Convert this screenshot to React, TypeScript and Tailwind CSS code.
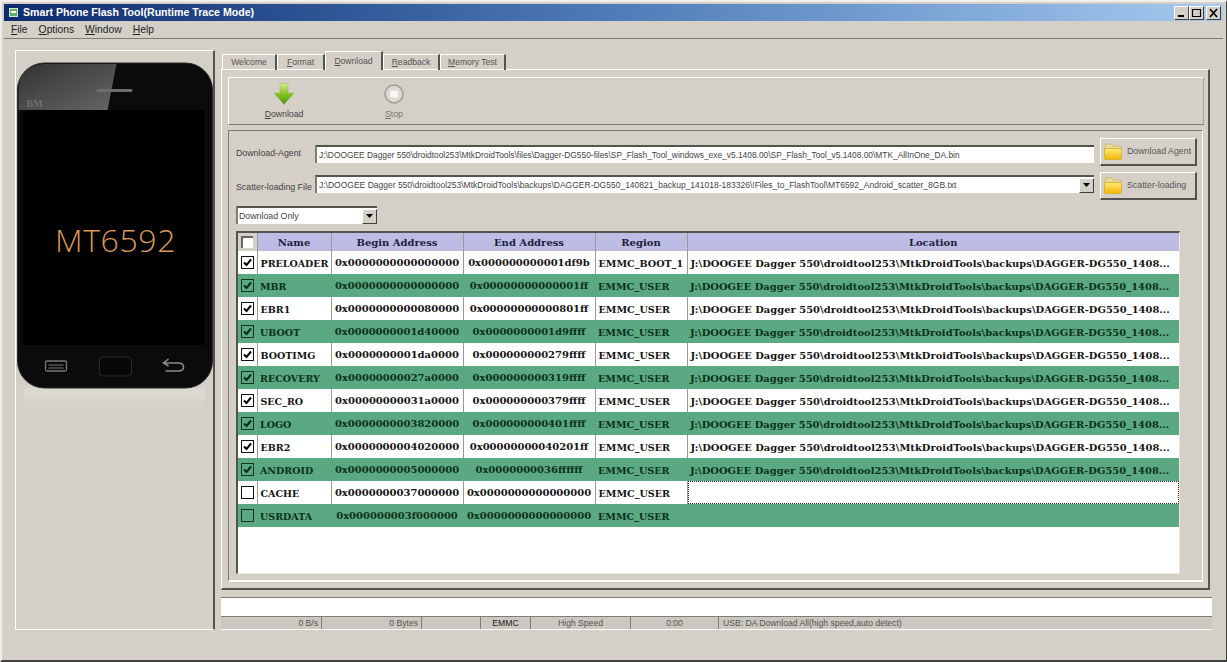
import React from "react";

const LOC = "J:\\DOOGEE Dagger 550\\droidtool253\\MtkDroidTools\\backups\\DAGGER-DG550_1408...";

const rows = [
  { name: "PRELOADER", begin: "0x0000000000000000", end: "0x000000000001df9b", region: "EMMC_BOOT_1", on: true, loc: LOC },
  { name: "MBR", begin: "0x0000000000000000", end: "0x00000000000001ff", region: "EMMC_USER", on: true, loc: LOC },
  { name: "EBR1", begin: "0x0000000000080000", end: "0x00000000000801ff", region: "EMMC_USER", on: true, loc: LOC },
  { name: "UBOOT", begin: "0x0000000001d40000", end: "0x0000000001d9ffff", region: "EMMC_USER", on: true, loc: LOC },
  { name: "BOOTIMG", begin: "0x0000000001da0000", end: "0x000000000279ffff", region: "EMMC_USER", on: true, loc: LOC },
  { name: "RECOVERY", begin: "0x00000000027a0000", end: "0x000000000319ffff", region: "EMMC_USER", on: true, loc: LOC },
  { name: "SEC_RO", begin: "0x00000000031a0000", end: "0x000000000379ffff", region: "EMMC_USER", on: true, loc: LOC },
  { name: "LOGO", begin: "0x0000000003820000", end: "0x000000000401ffff", region: "EMMC_USER", on: true, loc: LOC },
  { name: "EBR2", begin: "0x0000000004020000", end: "0x00000000040201ff", region: "EMMC_USER", on: true, loc: LOC },
  { name: "ANDROID", begin: "0x0000000005000000", end: "0x0000000036ffffff", region: "EMMC_USER", on: true, loc: LOC },
  { name: "CACHE", begin: "0x0000000037000000", end: "0x0000000000000000", region: "EMMC_USER", on: false, loc: "" },
  { name: "USRDATA", begin: "0x000000003f000000", end: "0x0000000000000000", region: "EMMC_USER", on: false, loc: "" },
];

function Folder() {
  return (
    <svg width="18" height="17" viewBox="0 0 18 17" className="shrink-0">
      <defs>
        <linearGradient id="fold" x1="0" y1="0" x2="0" y2="1">
          <stop offset="0" stopColor="#ffe97a" />
          <stop offset="1" stopColor="#f2b600" />
        </linearGradient>
      </defs>
      <path d="M1 3 Q1 1 3 1 H7 L9 3 H15 Q17 3 17 5 V6 H1 Z" fill="#e8d9a0" stroke="#c9a93c" strokeWidth="0.6" />
      <path d="M0.5 5.5 H17.5 V15 Q17.5 16.5 16 16.5 H2 Q0.5 16.5 0.5 15 Z" fill="url(#fold)" stroke="#cfa30e" strokeWidth="0.6" />
    </svg>
  );
}

function Caret() {
  return (
    <span className="flex h-[15px] w-[15px] shrink-0 items-center justify-center border border-t-white border-l-white border-r-[#404040] border-b-[#404040] bg-[#d4d0c8]">
      <svg width="7" height="4" viewBox="0 0 7 4">
        <path d="M0 0 H7 L3.5 4 Z" fill="#000" />
      </svg>
    </span>
  );
}

function Check({ on, green }: { on: boolean; green: boolean }) {
  return (
    <span
      className={
        green
          ? "flex h-[13px] w-[13px] items-center justify-center border border-[#12351f] bg-[#5aa982]"
          : "flex h-[13px] w-[13px] items-center justify-center border border-[#111] bg-white"
      }
    >
      {on && (
        <svg width="11" height="11" viewBox="0 0 11 11">
          <path d="M2 5.5 L4.5 8 L9 2.5" fill="none" stroke={green ? "#0c2a16" : "#000"} strokeWidth="2" />
        </svg>
      )}
    </span>
  );
}

function WinButton({ kind }: { kind: "min" | "max" | "close" }) {
  return (
    <span className="flex h-[14px] w-[15px] items-center justify-center border border-t-white border-l-white border-r-[#404040] border-b-[#404040] bg-[#d4d0c8]">
      <svg width="11" height="10" viewBox="0 0 11 10">
        {kind === "min" && <rect x="2" y="7" width="6" height="2" fill="#000" />}
        {kind === "max" && <path d="M1.5 1.5 H9.5 V8.5 H1.5 Z M1 1.5 H10" fill="none" stroke="#000" strokeWidth="1.2" />}
        {kind === "close" && <path d="M2 1 L9 9 M9 1 L2 9" stroke="#000" strokeWidth="1.7" />}
      </svg>
    </span>
  );
}

function Phone() {
  return (
    <svg width="198" height="362" viewBox="0.5 1 198 362" className="block">
      <defs>
        <linearGradient id="glare" x1="0" y1="0" x2="1" y2="1">
          <stop offset="0" stopColor="#333" />
          <stop offset="1" stopColor="#666" />
        </linearGradient>
        <linearGradient id="refl" x1="0" y1="0" x2="0" y2="1">
          <stop offset="0" stopColor="#c4c1ba" />
          <stop offset="0.3" stopColor="#dcd9d3" />
          <stop offset="1" stopColor="#d4d0c8" />
        </linearGradient>
      </defs>
      <rect x="8" y="330" width="182" height="32" rx="10" fill="url(#refl)" />
      <rect x="2" y="13" width="195" height="325" rx="27" fill="#0b0b0b" stroke="#2a2a2a" strokeWidth="1" />
      <path d="M3 60 V42 Q3 14 30 14 H101 L92 60 Z" fill="url(#glare)" />
      <rect x="81" y="39" width="36" height="3" rx="1.5" fill="#6e6e6e" />
      <text x="11" y="57" fontFamily="'Liberation Serif', serif" fontSize="10" fontWeight="700" fill="#6f6f6f">BM</text>
      <rect x="8" y="60" width="181" height="235" fill="#000" />
      <text x="100" y="202" textAnchor="middle" fontFamily="'Open Sans', sans-serif" fontSize="32" fontWeight="300" fill="#d99a55" letterSpacing="0.6">MT6592</text>
      <rect x="30" y="311" width="21" height="10" rx="1.5" fill="none" stroke="#777" strokeWidth="1.3" />
      <path d="M33 315 H48 M33 318 H48" stroke="#777" strokeWidth="1" />
      <rect x="84" y="307" width="32" height="19" rx="4" fill="#070707" stroke="#2b2b2b" />
      <path d="M149 313 H163 Q168 313 168 317 Q168 321 163 321 H150 M153 309 L148 313 L153 316" fill="none" stroke="#8a8a8a" strokeWidth="1.6" />
    </svg>
  );
}

function App() {
  const cell = "border-r border-[#9a9a9a]";
  return (
    <div className="box-border flex h-[662px] w-[1227px] flex-col overflow-hidden border-t-2 border-l-2 border-r border-b-2 border-t-[#f1efeb] border-l-[#efede8] border-r-[#404040] border-b-[#404040] bg-[#d4d0c8] pt-[2px] pr-[3px] pl-[2px] font-['Liberation_Sans',sans-serif] text-[#444]">
      <div className="flex h-[17px] shrink-0 items-center bg-linear-to-r from-[#0f2a6e] via-[#4f7cb8] to-[#a6caf0] pr-[2px] pl-[5px] text-[10.6px] font-bold text-white">
        <span className="mr-[5px] flex h-[9px] w-[9px] items-start border border-[#cfe6d0] bg-[#5fae6a]">
          <span className="mt-[2px] ml-[1px] h-[2px] w-[5px] bg-white"></span>
        </span>
        <span className="flex-1">Smart Phone Flash Tool(Runtime Trace Mode)</span>
        <span className="flex">
          <WinButton kind="min" />
          <WinButton kind="max" />
          <span className="w-[2px]"></span>
          <WinButton kind="close" />
        </span>
      </div>

      <div className="flex h-[18px] shrink-0 items-center gap-[11px] border-b border-[#7d7a74] pl-[7px] text-[10.3px] text-[#222]">
        <span><u>F</u>ile</span>
        <span><u>O</u>ptions</span>
        <span><u>W</u>indow</span>
        <span><u>H</u>elp</span>
      </div>

      <div className="mt-[11px] flex h-[580px] shrink-0 gap-[6px] pl-[11px]">
        <div className="box-border h-[580px] w-[200px] shrink-0 border-t border-l border-r-2 border-b border-t-white border-l-white border-r-[#55534e] border-b-white">
          <Phone />
        </div>

        <div className="flex w-[991px] shrink-0 flex-col">
          <div className="relative z-10 mt-[1px] -mb-[1px] flex h-[19px] shrink-0 items-end pl-[1px] text-[8.6px] text-[#555]">
            <span className="flex h-[16px] w-[55px] items-center justify-center border-t border-l border-r-2 border-t-white border-l-white border-r-[#55534e]">Welcome</span>
            <span className="flex h-[16px] w-[48px] items-center justify-center border-t border-l border-r-2 border-t-white border-l-white border-r-[#55534e]"><span><u>F</u>ormat</span></span>
            <span className="flex h-[19px] w-[58px] items-start justify-center border-t border-l border-r-2 border-t-white border-l-white border-r-[#55534e] bg-[#d4d0c8] pt-[3px]"><span><u>D</u>ownload</span></span>
            <span className="flex h-[16px] w-[57px] items-center justify-center border-t border-l border-r-2 border-t-white border-l-white border-r-[#55534e]"><span><u>R</u>eadback</span></span>
            <span className="flex h-[16px] w-[66px] items-center justify-center border-t border-l border-r-2 border-t-white border-l-white border-r-[#55534e]"><span><u>M</u>emory Test</span></span>
          </div>

          <div className="box-border h-[521px] w-[989px] shrink-0 border-t border-l border-r-2 border-b-2 border-t-white border-l-white border-r-[#55534e] border-b-[#55534e] pt-[7px] pl-[6px]">
            <div className="box-border flex h-[48px] w-[976px] border-t border-l border-r border-b border-t-white border-l-white border-r-[#a8a59e] border-b-[#7d7a74] pt-[5px] pl-[25px] text-[8.7px]">
              <div className="flex w-[60px] flex-col items-center">
                <svg width="22" height="22" viewBox="0 0 22 22">
                  <defs>
                    <linearGradient id="arrow" x1="0" y1="0" x2="0" y2="1">
                      <stop offset="0" stopColor="#d4ec8a" />
                      <stop offset="0.55" stopColor="#7fbf1c" />
                      <stop offset="1" stopColor="#4d8f08" />
                    </linearGradient>
                  </defs>
                  <path d="M7 0.5 H15 V10 H21 L11 21.5 L1 10 H7 Z" fill="url(#arrow)" stroke="#8cb84a" strokeWidth="0.5" />
                </svg>
                <span className="mt-[4px] leading-[11px]"><u>D</u>ownload</span>
              </div>
              <div className="ml-[50px] flex w-[60px] flex-col items-center text-[#777]">
                <svg width="22" height="22" viewBox="0 0 22 22">
                  <circle cx="11" cy="11" r="9" fill="#dcd9d3" stroke="#9d9a94" strokeWidth="1.4" />
                  <rect x="7" y="7.5" width="8" height="7" rx="1.5" fill="#f7f6f3" />
                </svg>
                <span className="mt-[4px] leading-[11px]"><u>S</u>top</span>
              </div>
            </div>

            <div className="mt-[5px] box-border flex h-[452px] w-[975px] flex-col border-t border-l border-r border-b-2 border-t-[#7d7a74] border-l-[#7d7a74] border-r-white border-b-white pt-[7px] pr-[5px] pl-[7px] text-[8.8px]">
              <div className="flex h-[28px] shrink-0 items-start">
                <span className="mt-[9px] w-[79px] shrink-0 leading-[12px] whitespace-nowrap">Download-Agent</span>
                <span className="mt-[7px] box-border flex h-[18px] w-[779px] shrink-0 items-center border-t-2 border-l-2 border-t-[#55534e] border-l-[#807d77] bg-white pl-[2px] text-[8.4px] whitespace-nowrap">J:\DOOGEE Dagger 550\droidtool253\MtkDroidTools\files\Dagger-DG550-files\SP_Flash_Tool_windows_exe_v5.1408.00\SP_Flash_Tool_v5.1408.00\MTK_AllInOne_DA.bin</span>
                <button className="ml-[6px] box-border flex h-[28px] w-[97px] shrink-0 items-center border border-r-2 border-b-2 border-t-white border-l-white border-r-[#55534e] border-b-[#55534e] pl-[3px]">
                  <Folder />
                  <span className="ml-[5px] whitespace-nowrap text-[#555]">Download Agent</span>
                </button>
              </div>
              <div className="mt-[6px] flex h-[28px] shrink-0 items-start">
                <span className="mt-[9px] w-[79px] shrink-0 leading-[12px] whitespace-nowrap">Scatter-loading File</span>
                <span className="mt-[3px] box-border flex h-[18px] w-[779px] shrink-0 items-center overflow-hidden border-t-2 border-l-2 border-t-[#55534e] border-l-[#807d77] bg-white pl-[2px] text-[8.5px] whitespace-nowrap">
                  <span className="flex-1">J:\DOOGEE Dagger 550\droidtool253\MtkDroidTools\backups\DAGGER-DG550_140821_backup_141018-183326\!Files_to_FlashTool\MT6592_Android_scatter_8GB.txt</span>
                  <Caret />
                </span>
                <button className="ml-[6px] box-border flex h-[28px] w-[97px] shrink-0 items-center border border-r-2 border-b-2 border-t-white border-l-white border-r-[#55534e] border-b-[#55534e] pl-[3px]">
                  <Folder />
                  <span className="ml-[5px] whitespace-nowrap text-[#555]">Scatter-loading</span>
                </button>
              </div>

              <div className="mt-[6px] box-border flex h-[18px] w-[141px] shrink-0 items-center justify-between border-t-2 border-l-2 border-t-[#55534e] border-l-[#807d77] bg-white pl-[1px]">
                <span className="pt-[1px]">Download Only</span>
                <Caret />
              </div>

              <div className="mt-[7px] box-border h-[343px] w-[944px] shrink-0 border-t-2 border-l-2 border-r border-b border-t-[#55534e] border-l-[#55534e] border-r-[#e9e7e2] border-b-[#e9e7e2] bg-white font-['DejaVu_Serif',serif] text-[10px] font-bold">
                <table className="w-[941px] table-fixed border-collapse">
                  <colgroup>
                    <col className="w-[19px]" />
                    <col className="w-[74px]" />
                    <col className="w-[132px]" />
                    <col className="w-[132px]" />
                    <col className="w-[92px]" />
                    <col className="w-[492px]" />
                  </colgroup>
                  <thead>
                    <tr className="h-[18px] bg-[#bcbce4] text-[#20203c]">
                      <th className={cell + " bg-[#d4d0c8] p-0"}>
                        <span className="flex justify-center">
                          <span className="h-[12px] w-[12px] border-t-2 border-l-2 border-t-[#666] border-l-[#666] bg-white"></span>
                        </span>
                      </th>
                      <th className={cell + " p-0 font-bold"}>Name</th>
                      <th className={cell + " p-0 font-bold"}>Begin Address</th>
                      <th className={cell + " p-0 font-bold"}>End Address</th>
                      <th className={cell + " p-0 font-bold"}>Region</th>
                      <th className="p-0 font-bold">Location</th>
                    </tr>
                  </thead>
                  <tbody>
                    {rows.map((r, i) => {
                      const green = i % 2 === 1;
                      const c = green ? "" : cell;
                      return (
                        <tr key={r.name} className={green ? "h-[23px] bg-[#5aa982] text-[#0b3018]" : "h-[23px] bg-white text-[#141414]"}>
                          <td className={c + " p-0"}>
                            <span className="flex justify-center">
                              <Check on={r.on} green={green} />
                            </span>
                          </td>
                          <td className={c + " overflow-hidden pt-[3px] pr-[2px] pb-0 pl-[3px] text-[9.5px] whitespace-nowrap"}>{r.name}</td>
                          <td className={c + " p-0 text-center whitespace-nowrap"}>{r.begin}</td>
                          <td className={c + " p-0 text-center whitespace-nowrap"}>{r.end}</td>
                          <td className={c + " pt-[3px] pr-[2px] pb-0 pl-[3px] text-[9.6px] whitespace-nowrap"}>{r.region}</td>
                          {r.name === "CACHE" ? (
                            <td className="p-0">
                              <div className="box-border h-[23px] border border-dotted border-[#222]"></div>
                            </td>
                          ) : (
                            <td className="pt-[3px] pr-0 pb-0 pl-[3px] text-[9.9px] tracking-[0.05px] whitespace-nowrap">{r.loc}</td>
                          )}
                        </tr>
                      );
                    })}
                  </tbody>
                </table>
              </div>
            </div>
          </div>

          <div className="mt-[7px] box-border h-[19px] w-[991px] shrink-0 border-t border-t-[#807d77] bg-white"></div>
          <div className="box-border flex h-[14px] w-[991px] shrink-0 border-b border-b-white bg-[#cbc8c1] text-[8.6px] leading-[13px] text-[#555]">
            <span className="box-border w-[101px] border-t border-r border-t-[#807d77] border-r-[#807d77] pr-[3px] text-right">0 B/s</span>
            <span className="box-border w-[100px] border-t border-r border-t-[#807d77] border-r-[#807d77] pr-[3px] text-right">0 Bytes</span>
            <span className="box-border w-[59px] border-t border-r border-t-[#807d77] border-r-[#807d77]"></span>
            <span className="box-border w-[50px] border-t border-r border-t-[#807d77] border-r-[#807d77] text-center text-[#222]">EMMC</span>
            <span className="box-border w-[100px] border-t border-r border-t-[#807d77] border-r-[#807d77] text-center">High Speed</span>
            <span className="box-border w-[88px] border-t border-r border-t-[#807d77] border-r-[#807d77] text-center">0:00</span>
            <span className="box-border flex-1 border-t border-t-[#807d77] pl-[4px]">USB: DA Download All(high speed,auto detect)</span>
          </div>
        </div>
      </div>
    </div>
  );
}

export default App;
